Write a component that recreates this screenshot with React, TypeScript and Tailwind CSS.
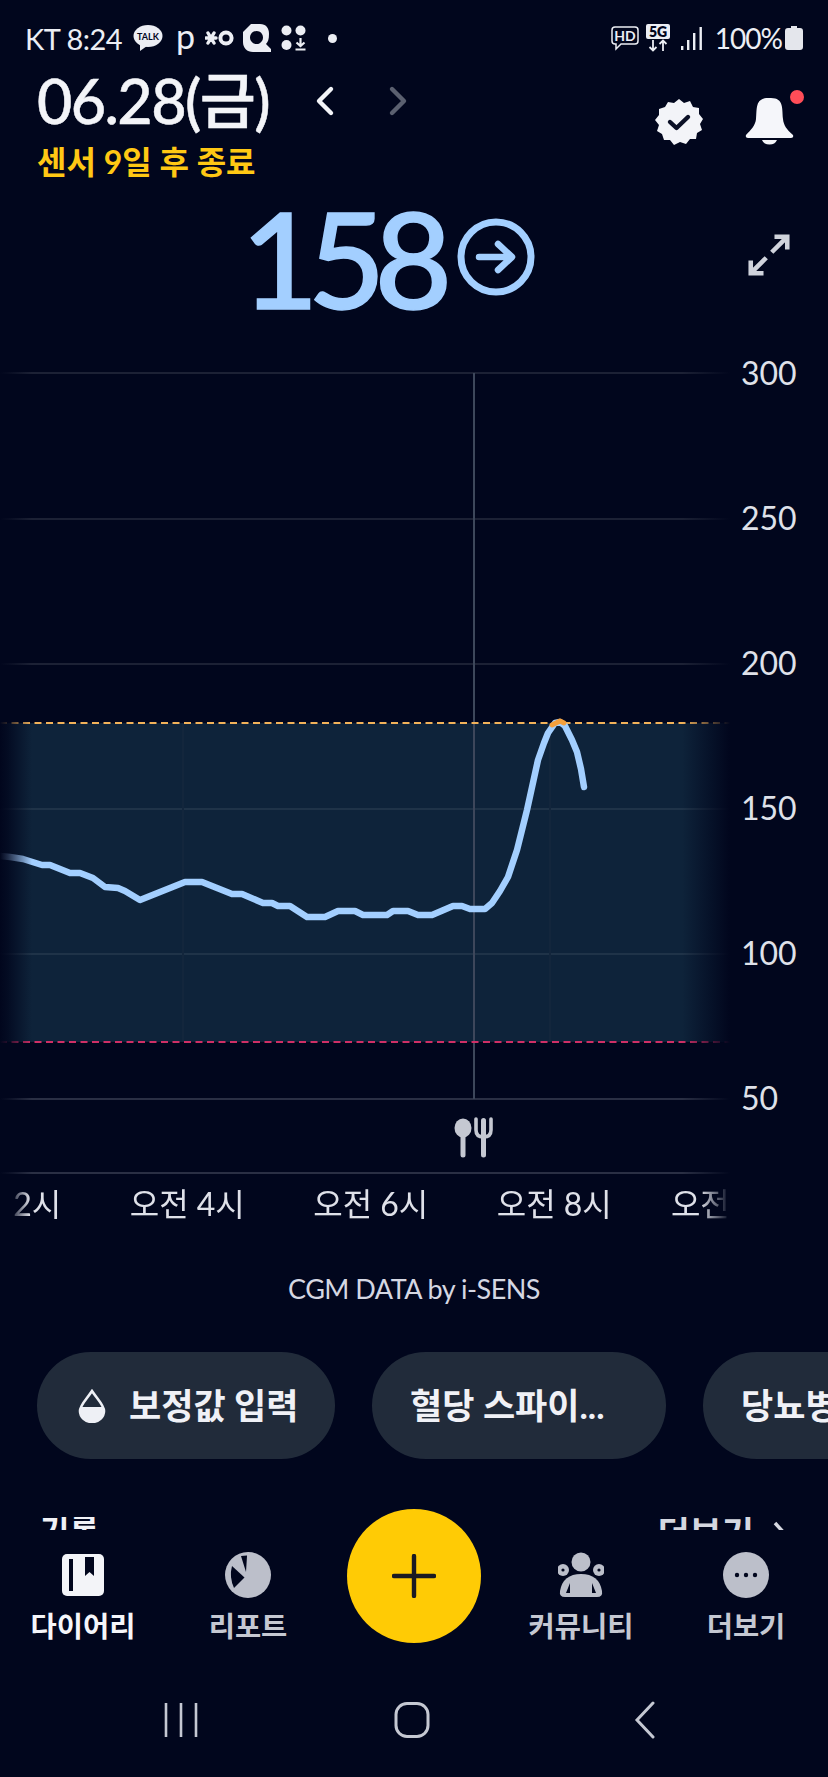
const curve =
  '0,856 10,857 23,859 42,865 50,865 70,873 80,873 93,878 105,887 118,888 125,891 140,900 185,882 202,882 232,894 242,894 263,903 272,903 278,906 290,906 307,917 325,917 338,911 355,911 363,915 387,915 393,911 408,911 418,915 432,915 453,906 462,906 470,909 485,909 492,903 500,891 508,877 517,850 527,810 538,760 544,743 548,733 555,723 560,722 565,726 572,740 577,752 581,769 584,787';

const gridYs = [373, 519, 664, 809, 954];
const yLabels = ['300', '250', '200', '150', '100', '50'];
const timeLabels = ['오전 2시', '오전 4시', '오전 6시', '오전 8시', '오전 10시'];

function StatusBar() {
  return (
    <div className="flex h-[68px] shrink-0 items-center pt-[8px] pl-[25px] pr-[25px] text-[#eceef4]">
      <span className="w-[98px] shrink-0 text-[29px] leading-none tracking-[-0.5px]">KT 8:24</span>
      <svg width="30" height="28" viewBox="0 0 30 28" className="ml-[10px]">
        <ellipse cx="15" cy="12" rx="14.5" ry="11" fill="#eceef4" />
        <path d="M7 20 L7 27 L14 22 Z" fill="#eceef4" />
        <text x="15" y="15.5" textAnchor="middle" fontSize="9" fontWeight="700" fill="#01061d">TALK</text>
      </svg>
      <span className="ml-[13px] text-[34px] leading-none mt-[-4px] w-[19px]">p</span>
      <svg width="30" height="18" viewBox="0 0 30 18" className="ml-[10px]">
        <path d="M1 9 H11 M3 4 L9 14 M9 4 L3 14" stroke="#eceef4" strokeWidth="3.4" strokeLinecap="round" />
        <circle cx="21" cy="9" r="5.6" fill="none" stroke="#eceef4" strokeWidth="4" />
      </svg>
      <svg width="28" height="28" viewBox="0 0 28 28" className="ml-[8px]">
        <path fillRule="evenodd" d="M8 0 H17 C23 0 26 4 26 10 C26 15 25 18 23 20 L28 25 V28 H10 C4 28 0 24 0 18 V8 Z M13.5 7 a6.5 6.5 0 1 0 0.01 0 Z" fill="#eceef4" />
      </svg>
      <svg width="26" height="26" viewBox="0 0 26 26" className="ml-[10px]">
        <circle cx="5.5" cy="5.5" r="5" fill="#eceef4" />
        <circle cx="19.5" cy="5.5" r="5" fill="#eceef4" />
        <circle cx="5.5" cy="20" r="5" fill="#eceef4" />
        <path d="M19.5 13 V20 M15.5 17.5 L19.5 21 L23.5 17.5 M14.5 24.5 H24.5" fill="none" stroke="#eceef4" strokeWidth="2.2" />
      </svg>
      <span className="ml-[21px] h-[9px] w-[9px] rounded-full bg-[#eceef4]" />
      <div className="ml-auto flex items-center">
        <svg width="28" height="26" viewBox="0 0 28 26">
          <path d="M4 2 H24 Q27 2 27 5 V16 Q27 19 24 19 H10 L5 24 V19 H4 Q1 19 1 16 V5 Q1 2 4 2 Z" fill="none" stroke="#eceef4" strokeWidth="1.5" />
          <text x="14" y="15.5" textAnchor="middle" fontSize="14" fontWeight="700" fill="#eceef4">HD</text>
        </svg>
        <svg width="26" height="28" viewBox="0 0 26 28" className="ml-[6px]">
          <rect x="1" y="0" width="24" height="15" rx="2" fill="#eceef4" />
          <text x="13" y="13" textAnchor="middle" fontSize="14" fontWeight="800" fill="#01061d">5G</text>
          <path d="M8 16 V26 M4.5 23 L8 26.5 L11.5 23 M18 27 V17 M14.5 20 L18 16.5 L21.5 20" fill="none" stroke="#eceef4" strokeWidth="1.8" />
        </svg>
        <svg width="22" height="24" viewBox="0 0 22 24" className="ml-[10px]">
          <rect x="0" y="20" width="2.4" height="4" fill="#eceef4" />
          <rect x="6" y="14" width="2.4" height="10" fill="#eceef4" />
          <rect x="12" y="7" width="2.4" height="17" fill="#eceef4" />
          <rect x="18.5" y="1" width="2.4" height="23" fill="#eceef4" />
        </svg>
        <span className="ml-[12px] text-[28px] leading-none tracking-[-1px]">100%</span>
        <svg width="18" height="24" viewBox="0 0 18 24" className="ml-[3px]">
          <path d="M6 0 H12 V2 H15 Q18 2 18 5 V21 Q18 24 15 24 H3 Q0 24 0 21 V5 Q0 2 3 2 H6 Z" fill="#e4e6ec" />
        </svg>
      </div>
    </div>
  );
}

function Header() {
  return (
    <div className="flex h-[128px] shrink-0 items-start pl-[37px] pr-[21px]">
      <div className="flex flex-col">
        <div className="flex items-center">
          <span className="w-[262px] text-[61px] leading-[66px] font-medium tracking-[-1.6px] text-[#f3f4f8] [-webkit-text-stroke:0.5px_#f3f4f8]">06.28(금)</span>
          <svg width="20" height="32" viewBox="0 0 20 32" className="ml-[16px]">
            <path d="M16 4 L4 16 L16 28" fill="none" stroke="#f3f4f8" strokeWidth="4.4" strokeLinecap="round" strokeLinejoin="round" />
          </svg>
          <svg width="20" height="32" viewBox="0 0 20 32" className="ml-[53px]">
            <path d="M4 4 L16 16 L4 28" fill="none" stroke="#5b6070" strokeWidth="4.4" strokeLinecap="round" strokeLinejoin="round" />
          </svg>
        </div>
        <span className="mt-[8px] text-[32px] leading-[40px] font-bold text-[#ffc814]">센서 9일 후 종료</span>
      </div>
      <div className="ml-auto flex items-start">
        <svg width="48" height="48" viewBox="0 0 48 48" className="mt-[30px]">
          <path d="M24 1 L29 5 L35 3 L38 9 L44 10 L44 16 L48 21 L45 26 L47 32 L42 35 L41 41 L35 41 L31 46 L25 44 L19 47 L15 42 L9 42 L7 36 L2 33 L4 27 L0 22 L4 17 L4 11 L10 9 L13 4 L19 5 Z" fill="#f3f4f8" />
          <path d="M15 24 L21.5 30 L33 19" fill="none" stroke="#0b1026" strokeWidth="4.4" strokeLinecap="round" strokeLinejoin="round" />
        </svg>
        <svg width="62" height="62" viewBox="0 0 62 62" className="ml-[42px] mt-[20px]">
          <path d="M23 15 C10 15 12 26 11 36 C10.5 42 6 47 1 52 Q0 55 3 55 H46 Q49 55 48 52 C42 47 38.5 42 38 36 C37 26 39 15 26 15 Z" transform="translate(0 -5)" fill="#f5f6fa" />
          <path d="M17 52 A8 7 0 0 0 32 52 Z" fill="#f5f6fa" />
          <circle cx="52" cy="9" r="7" fill="#ff4d58" />
        </svg>
      </div>
    </div>
  );
}

function Reading() {
  return (
    <div className="flex h-[159px] shrink-0 items-start pl-[241px] pr-[38px]">
      <span className="mt-[-18px] w-[212px] shrink-0 text-[134px] leading-[160px] font-medium tracking-[-11px] text-[#a3cfff] [-webkit-text-stroke:1.5px_#a3cfff]">158</span>
      <svg width="78" height="78" viewBox="0 0 78 78" className="ml-[4px] mt-[22px]">
        <circle cx="39" cy="39" r="35" fill="none" stroke="#a3cfff" strokeWidth="7" />
        <path d="M22 39 H54 M41 26 L55 39 L41 52" fill="none" stroke="#a3cfff" strokeWidth="6.5" strokeLinecap="round" strokeLinejoin="round" />
      </svg>
      <svg width="42" height="42" viewBox="0 0 46 46" className="ml-auto mt-[38px]">
        <path d="M26 20 L41 5 M29 3 H43 V17 M20 26 L5 41 M3 29 V43 H17" fill="none" stroke="#d0d3dc" strokeWidth="5" />
      </svg>
    </div>
  );
}

function Chart() {
  return (
    <div className="flex h-[825px] shrink-0">
      <svg width="730" height="825" viewBox="0 355 730 825" className="shrink-0">
        <defs>
          <linearGradient id="fadeLeft" x1="0" x2="1" y1="0" y2="0">
            <stop offset="0" stopColor="#01061d" />
            <stop offset="0.25" stopColor="#01061d" stopOpacity="0.8" />
            <stop offset="1" stopColor="#01061d" stopOpacity="0" />
          </linearGradient>
          <linearGradient id="fadeRight" x1="0" x2="1" y1="0" y2="0">
            <stop offset="0" stopColor="#01061d" stopOpacity="0" />
            <stop offset="1" stopColor="#01061d" />
          </linearGradient>
        </defs>
        <rect x="0" y="723" width="730" height="319" fill="#0e233a" />
        {gridYs.map((y) => (
          <line key={y} x1="0" x2="730" y1={y} y2={y} stroke={y > 723 ? '#1f3348' : '#1c2135'} strokeWidth="2" />
        ))}
        <line x1="0" x2="730" y1="1099" y2="1099" stroke="#2a2f44" strokeWidth="2" />
        <line x1="0" x2="730" y1="1173" y2="1173" stroke="#2a2f44" strokeWidth="2" />
        <line x1="183" x2="183" y1="723" y2="1042" stroke="#13263c" strokeWidth="2" />
        <line x1="550" x2="550" y1="723" y2="1042" stroke="#13263c" strokeWidth="2" />
        <line x1="474" x2="474" y1="373" y2="1099" stroke="#3d475b" strokeWidth="2" />
        <line x1="0" x2="730" y1="723" y2="723" stroke="#f2b25a" strokeWidth="2" strokeDasharray="7 4.5" />
        <line x1="0" x2="730" y1="1042" y2="1042" stroke="#cf2f66" strokeWidth="2" strokeDasharray="7 4.5" />
        <polyline points={curve} fill="none" stroke="#a3cfff" strokeWidth="6.5" strokeLinejoin="round" strokeLinecap="round" />
        <path d="M552 725 L560 721 L564 723" fill="none" stroke="#f5a03c" strokeWidth="5" strokeLinecap="round" strokeLinejoin="round" />
        <rect x="0" y="355" width="32" height="825" fill="url(#fadeLeft)" />
        <rect x="682" y="355" width="48" height="825" fill="url(#fadeRight)" />
        <g fill="#c5c8d2">
          <ellipse cx="463" cy="1128" rx="8.5" ry="9.5" />
          <rect x="460.5" y="1130" width="5" height="27.5" rx="2.5" />
          <rect x="481" y="1118" width="5" height="39.5" rx="2.5" />
        </g>
        <path d="M476 1119 V1130 Q476 1137 483.5 1137 Q491 1137 491 1130 V1119" fill="none" stroke="#c5c8d2" strokeWidth="3.6" strokeLinecap="round" />
      </svg>
      <div className="flex flex-col gap-[109px] pl-[11px]">
        {yLabels.map((label) => (
          <span key={label} className="h-[36px] text-[32px] leading-[36px] text-[#dfe1e9]">{label}</span>
        ))}
      </div>
    </div>
  );
}

function TimeAxis() {
  return (
    <div className="h-[54px] w-[730px] shrink-0 overflow-hidden [mask-image:linear-gradient(to_right,transparent_8px,black_30px,black_700px,transparent_730px)]">
      <div className="ml-[-88px] flex w-[1000px] pt-[2px]">
        {timeLabels.map((label) => (
          <span key={label} className="w-[183.5px] shrink-0 text-center text-[32px] leading-[44px] whitespace-nowrap text-[#dfe1e9]">{label}</span>
        ))}
      </div>
    </div>
  );
}

function DropIcon() {
  return (
    <svg width="28" height="34" viewBox="0 0 28 34">
      <path d="M14 2 C8 11 2 16 2 22 A12 11 0 0 0 26 22 C26 16 20 11 14 2 Z" fill="none" stroke="#eef0f5" strokeWidth="2.6" />
      <path d="M2 18 H26 V22 A12 11 0 0 1 2 22 Z" fill="#eef0f5" />
    </svg>
  );
}

function Pills() {
  return (
    <div className="mt-[45px] flex shrink-0 gap-[37px] overflow-hidden pl-[37px]">
      <div className="flex h-[107px] w-[298px] shrink-0 items-center rounded-full bg-[#212b3a] pl-[41px]">
        <DropIcon />
        <span className="ml-[23px] text-[35px] font-bold whitespace-nowrap text-[#f0f1f6]">보정값 입력</span>
      </div>
      <div className="flex h-[107px] w-[294px] shrink-0 items-center rounded-full bg-[#212b3a] pl-[38px]">
        <span className="text-[35px] font-bold whitespace-nowrap text-[#f0f1f6]">혈당 스파이...</span>
      </div>
      <div className="flex h-[107px] w-[300px] shrink-0 items-center rounded-full bg-[#212b3a] pl-[38px]">
        <span className="text-[35px] font-bold whitespace-nowrap text-[#f0f1f6]">당뇨병 관리</span>
      </div>
    </div>
  );
}

function SectionTitle() {
  return (
    <div className="mt-[58px] flex h-[13px] shrink-0 overflow-hidden pl-[40px] pr-[40px]">
      <span className="mt-[-8px] text-[32px] leading-[42px] font-bold text-[#f0f1f6]">기록</span>
      <span className="mt-[-6px] ml-auto flex items-start text-[35px] leading-[42px] font-bold text-[#d5d7e0]">
        더보기
        <svg width="16" height="28" viewBox="0 0 16 28" className="mt-[9px] ml-[18px]">
          <path d="M3 3 L13 14 L3 25" fill="none" stroke="#d5d7e0" strokeWidth="3.5" />
        </svg>
      </span>
    </div>
  );
}

function NavItem({ label, active, className, children }: { label: string; active?: boolean; className: string; children: React.ReactNode }) {
  return (
    <div className={`flex flex-col items-center ${className}`}>
      <div className="flex h-[48px] items-center justify-center">{children}</div>
      <span className={`mt-[11px] text-[28.5px] leading-[32px] font-bold whitespace-nowrap ${active ? 'text-[#f5f6fa]' : 'text-[#c5c8d2]'}`}>{label}</span>
    </div>
  );
}

function BottomNav() {
  return (
    <div className="relative h-[247px] shrink-0 bg-[#01061d] pt-[21px]">
      <div className="flex">
        <NavItem label="다이어리" active className="w-[166px]">
          <svg width="42" height="42" viewBox="0 0 42 42">
            <rect width="42" height="42" rx="5" fill="#f3f4f8" />
            <rect x="7" y="5" width="4" height="32" fill="#01061d" />
            <path d="M23 3 H32 V22 L27.5 18 L23 22 Z" fill="#01061d" />
          </svg>
        </NavItem>
        <NavItem label="리포트" className="w-[164px]">
          <svg width="46" height="46" viewBox="0 0 46 46">
            <circle cx="23" cy="23" r="23" fill="#bcbfca" />
            <path d="M16 4 L22 3.5 L21 20 Z" fill="#01061d" />
            <path d="M7 14 L19.5 25.5 L9 36 Q4 25 7 14 Z" fill="#01061d" />
          </svg>
        </NavItem>
        <div className="w-[168px]" />
        <NavItem label="커뮤니티" className="w-[166px]">
          <svg width="46" height="46" viewBox="-1 0 46 46">
            <circle cx="22" cy="10" r="9.5" fill="#bcbfca" />
            <circle cx="4" cy="18" r="6" fill="#bcbfca" />
            <circle cx="40" cy="18" r="6" fill="#bcbfca" />
            <circle cx="4" cy="18" r="1.6" fill="#01061d" />
            <circle cx="40" cy="18" r="1.6" fill="#01061d" />
            <path d="M6 45 Q0 45 1 39 Q4 22 22 22 Q40 22 43 39 Q44 45 38 45 Z" fill="#bcbfca" />
            <path d="M7 41 L11 31 V41 Z M37 41 L33 31 V41 Z" fill="#01061d" />
          </svg>
        </NavItem>
        <NavItem label="더보기" className="w-[164px]">
          <svg width="46" height="46" viewBox="0 0 46 46">
            <circle cx="23" cy="23" r="23" fill="#bcbfca" />
            <circle cx="14" cy="23" r="2.2" fill="#01061d" />
            <circle cx="23" cy="23" r="2.2" fill="#01061d" />
            <circle cx="32" cy="23" r="2.2" fill="#01061d" />
          </svg>
        </NavItem>
      </div>
      <div className="absolute top-[-21px] left-[347px] flex h-[134px] w-[134px] items-center justify-center rounded-full bg-[#ffcb05]">
        <svg width="44" height="44" viewBox="0 0 44 44">
          <path d="M22 2 V42 M2 22 H42" stroke="#1a1a22" strokeWidth="4.4" strokeLinecap="round" />
        </svg>
      </div>
      <div className="mt-[59px] flex items-center pl-[164px]">
        <svg width="34" height="36" viewBox="0 0 34 36">
          <path d="M2 1 V35 M17 1 V35 M32 1 V35" stroke="#c5c8d2" strokeWidth="2.6" />
        </svg>
        <svg width="36" height="36" viewBox="0 0 36 36" className="ml-[196px]">
          <rect x="2" y="1.5" width="32" height="33" rx="11" fill="none" stroke="#c5c8d2" strokeWidth="3" />
        </svg>
        <svg width="22" height="38" viewBox="0 0 22 38" className="ml-[204px]">
          <path d="M19 2 L3 19 L19 36" fill="none" stroke="#c5c8d2" strokeWidth="3" strokeLinecap="round" />
        </svg>
      </div>
    </div>
  );
}

export default function App() {
  return (
    <div className="flex h-[1777px] w-[828px] flex-col overflow-hidden bg-[#01061d] [font-family:Lato,'Noto_Sans_CJK_KR',sans-serif]">
      <StatusBar />
      <Header />
      <Reading />
      <Chart />
      <TimeAxis />
      <div className="mt-[37px] shrink-0 text-center text-[27px] leading-[36px] tracking-[-0.5px] text-[#d5d7e2]">CGM DATA by i-SENS</div>
      <Pills />
      <SectionTitle />
      <BottomNav />
    </div>
  );
}
